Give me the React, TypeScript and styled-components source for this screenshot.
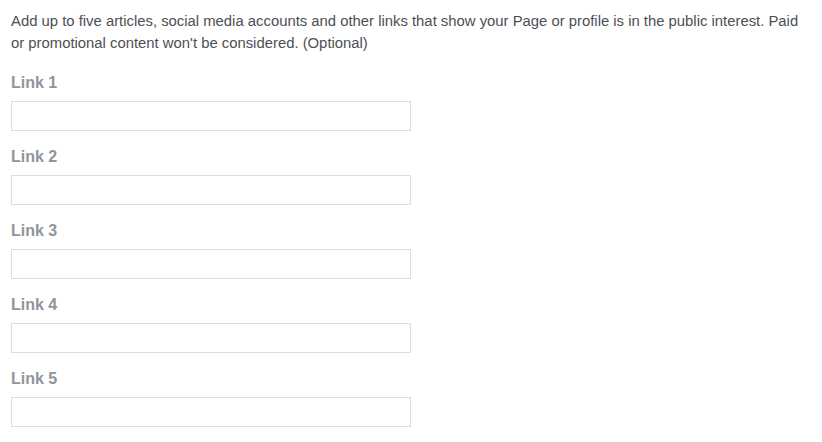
import React from "react";
import styled, { createGlobalStyle } from "styled-components";

const GlobalStyle = createGlobalStyle`
  html, body {
    margin: 0;
    padding: 0;
    background: #ffffff;
  }
  body {
    font-family: "Liberation Sans", Arial, Helvetica, sans-serif;
  }
`;

const Page = styled.div`
  padding: 10px 11px;
  width: 800px;
`;

const Intro = styled.p`
  margin: 0 0 20px;
  font-size: 14.85px;
  line-height: 22px;
  color: #4b4f56;
`;

const Field = styled.div`
  display: flex;
  flex-direction: column;
  margin-bottom: 17px;
`;

const Label = styled.label`
  font-size: 16px;
  line-height: 18px;
  font-weight: bold;
  color: #90949c;
  margin-bottom: 9px;
`;

const Input = styled.input`
  box-sizing: border-box;
  width: 400px;
  height: 30px;
  margin: 0;
  padding: 0 8px;
  border: 1px solid #dadde1;
  border-radius: 0;
  background: #ffffff;
  font-family: inherit;
  font-size: 14px;
  outline: none;
`;

const links = [1, 2, 3, 4, 5];

const App = () => {
  return (
    <Page>
      <GlobalStyle />
      <Intro>
        Add up to five articles, social media accounts and other links that show your Page or
        profile is in the public interest. Paid or promotional content won't be considered.
        (Optional)
      </Intro>
      {links.map((n) => (
        <Field key={n}>
          <Label htmlFor={`link-${n}`}>Link {n}</Label>
          <Input id={`link-${n}`} type="text" />
        </Field>
      ))}
    </Page>
  );
};

export default App;
